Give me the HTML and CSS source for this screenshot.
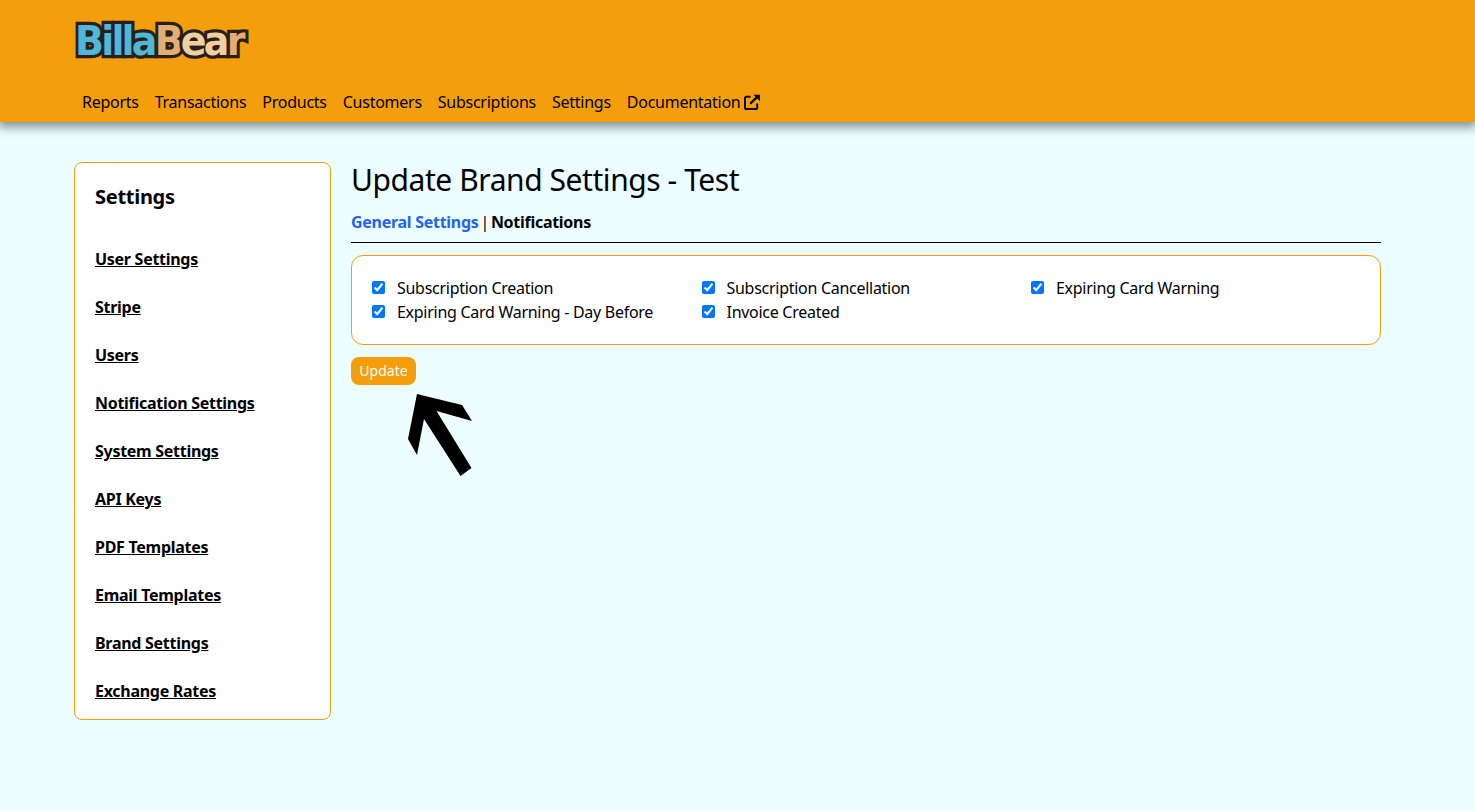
FILE: index.html
```html
<!DOCTYPE html>
<html lang="en">

<head>
    <meta charset="UTF-8" />
    <meta name="viewport" content="width=device-width, initial-scale=1.0" />
    <title>Update Brand Settings</title>
    <link rel="stylesheet" href="styles.css">
</head>

<body>
    <header class="topbar">
        <div class="logo"><span class="logo-billa">Billa</span><span class="logo-bear">B</span><span class="logo-bear-light">ea</span><span class="logo-bear">r</span></div>
        <nav class="mainnav">
            <a href="#">Reports</a>
            <a href="#">Transactions</a>
            <a href="#">Products</a>
            <a href="#">Customers</a>
            <a href="#">Subscriptions</a>
            <a href="#">Settings</a>
            <a href="#" class="doclink">Documentation
                <svg class="exticon" viewBox="0 0 16 16" width="16" height="16">
                    <path d="M6.500 2.800H2.600C1.700 2.800 1 3.500 1 4.400v9C1 14.300 1.700 15 2.600 15h9c.9 0 1.600-.7 1.600-1.600V9.500" fill="none" stroke="#000" stroke-width="2" />
                    <path d="M6.200 9.800 13.400 2.600" fill="none" stroke="#000" stroke-width="2.200" />
                    <path d="M9.600 .8H16v6.400z" fill="#000" />
                </svg>
            </a>
        </nav>
    </header>

    <div class="page">
        <aside class="sidebar">
            <h2>Settings</h2>
            <ul>
                <li><a href="#">User Settings</a></li>
                <li><a href="#">Stripe</a></li>
                <li><a href="#">Users</a></li>
                <li><a href="#">Notification Settings</a></li>
                <li><a href="#">System Settings</a></li>
                <li><a href="#">API Keys</a></li>
                <li><a href="#">PDF Templates</a></li>
                <li><a href="#">Email Templates</a></li>
                <li><a href="#">Brand Settings</a></li>
                <li><a href="#">Exchange Rates</a></li>
            </ul>
        </aside>

        <main class="content">
            <h1>Update Brand Settings - Test</h1>
            <div class="tabs">
                <a href="#" class="tab-active">General Settings</a> <span class="tabsep">|</span> <a href="#">Notifications</a>
            </div>
            <div class="card">
                <label class="check"><input type="checkbox" checked /><span>Subscription Creation</span></label>
                <label class="check"><input type="checkbox" checked /><span>Subscription Cancellation</span></label>
                <label class="check"><input type="checkbox" checked /><span>Expiring Card Warning</span></label>
                <label class="check"><input type="checkbox" checked /><span>Expiring Card Warning - Day Before</span></label>
                <label class="check"><input type="checkbox" checked /><span>Invoice Created</span></label>
            </div>
            <button class="btn" type="button">Update</button>
        </main>
    </div>

    <svg class="arrow" viewBox="0 0 66 84" width="66" height="84">
        <polygon points="10,1 55,12 65,28 29.500,18 64.500,75 53.500,83 17,26 10,62 1,46" fill="#000" />
    </svg>
</body>

</html>
```
FILE: styles.css
```css
body {
    font-family: "Noto Sans", "Open Sans", sans-serif;
    margin: 0;
    padding: 0;
    background-color: #ecfeff;
    color: #000;
    font-size: 16px;
    letter-spacing: -0.28px;
}

a {
    color: #000;
}

.topbar {
    height: 122px;
    box-sizing: border-box;
    background-color: #f59e0b;
    box-shadow: 0 3px 10px 2px #7f8c8e;
    padding: 19px 74px 0;
}

.logo {
    height: 44px;
    font-family: "DejaVu Sans", sans-serif;
    font-weight: bold;
    font-size: 38px;
    line-height: 44px;
    letter-spacing: -2.800px;
    -webkit-text-stroke: 6px #2a1f1a;
    paint-order: stroke fill;
    padding-left: 1px;
    transform: scaleY(1.08);
}

.logo-billa {
    color: #4fb8d6;
}

.logo-bear {
    color: #e5ad74;
}

.logo-bear-light {
    color: #f0d0a0;
}

.mainnav {
    display: flex;
    gap: 16px;
    margin-top: 27px;
    padding-left: 8px;
    line-height: 24px;
    letter-spacing: -0.26px;
}

.mainnav a {
    text-decoration: none;
}

.doclink {
    display: flex;
    align-items: center;
    gap: 4px;
}

.page {
    display: flex;
    gap: 20px;
    padding: 40px 94px 0 74px;
}

.sidebar {
    width: 257px;
    height: 558px;
    box-sizing: border-box;
    flex-shrink: 0;
    background-color: white;
    border: 1px solid #f59e0b;
    border-radius: 8px;
    padding: 20px;
}

.sidebar h2 {
    margin: 0 0 36px;
    font-size: 20px;
    line-height: 28px;
    font-weight: 700;
}

.sidebar ul {
    list-style: none;
    margin: 0;
    padding: 0;
}

.sidebar li {
    height: 48px;
    line-height: 24px;
    font-weight: 700;
}

.content {
    flex: 1;
    min-width: 0;
}

.content h1 {
    margin: 0;
    font-size: 30px;
    line-height: 36px;
    font-weight: 400;
    letter-spacing: -0.43px;
}

.tabs {
    margin-top: 12px;
    padding-bottom: 8px;
    line-height: 24px;
    border-bottom: 1px solid black;
    letter-spacing: -0.28px;
}

.tabs a {
    font-weight: 700;
    text-decoration: none;
}

.tabs .tab-active {
    color: #2563eb;
}

.tabsep {
    margin: 0 -2px;
}

.card {
    display: grid;
    grid-template-columns: 329.500px 329.500px 1fr;
    margin-top: 12px;
    padding: 20px;
    height: 90px;
    box-sizing: border-box;
    background-color: white;
    border: 1px solid #f59e0b;
    border-radius: 12px;
    align-content: start;
}

.check {
    display: flex;
    align-items: center;
    height: 24px;
}

.check input {
    width: 13px;
    height: 13px;
    margin: 0 12px 0 0;
    position: relative;
    top: -1px;
}

.btn {
    display: block;
    margin-top: 12px;
    height: 28px;
    width: 65px;
    padding: 0 0 2px;
    border: none;
    border-radius: 8px;
    background-color: #f59e0b;
    color: white;
    font-family: inherit;
    font-size: 14px;
}

.arrow {
    position: absolute;
    left: 407px;
    top: 393px;
}
```
